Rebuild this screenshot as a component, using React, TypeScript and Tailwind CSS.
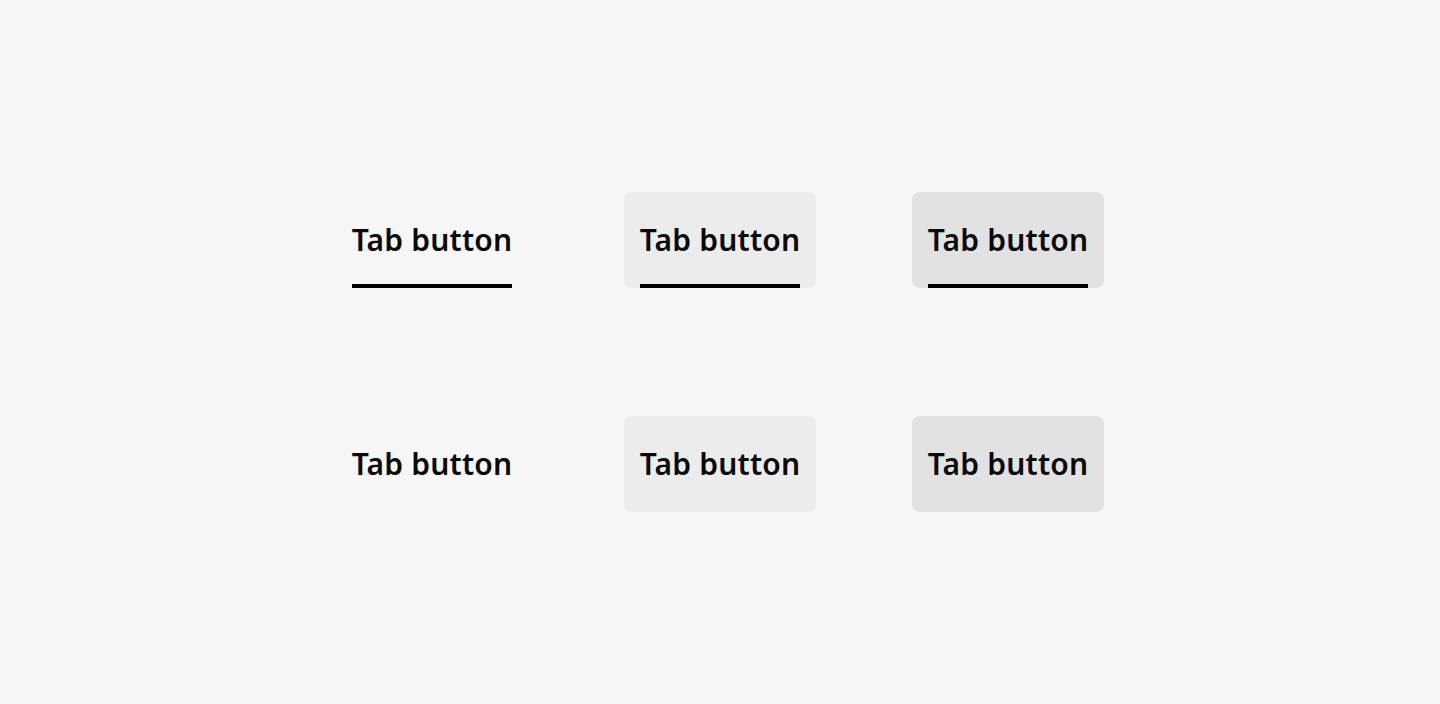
const variants = [
  { bg: "", selected: true },
  { bg: "bg-[#ececec]", selected: true },
  { bg: "bg-[#e2e2e2]", selected: true },
  { bg: "", selected: false },
  { bg: "bg-[#ececec]", selected: false },
  { bg: "bg-[#e2e2e2]", selected: false },
];

function TabButton({ bg, selected }: { bg: string; selected: boolean }) {
  return (
    <button
      type="button"
      className={`relative flex h-24 w-48 items-center justify-center rounded-lg px-4 ${bg}`}
    >
      <span
        className="text-[30px] font-semibold leading-9 tracking-[0.2px] text-[#0a0a0a] whitespace-nowrap"
        style={{ fontFamily: "'Noto Sans', sans-serif" }}
      >
        Tab button
      </span>
      {selected && <span className="absolute bottom-0 left-4 right-4 h-1 bg-black" />}
    </button>
  );
}

export default function App() {
  return (
    <div className="flex h-[704px] w-full items-center justify-center bg-[#f6f6f6]">
      <div className="grid grid-cols-3 gap-x-24 gap-y-32">
        {variants.map((v, i) => (
          <TabButton key={i} bg={v.bg} selected={v.selected} />
        ))}
      </div>
    </div>
  );
}
